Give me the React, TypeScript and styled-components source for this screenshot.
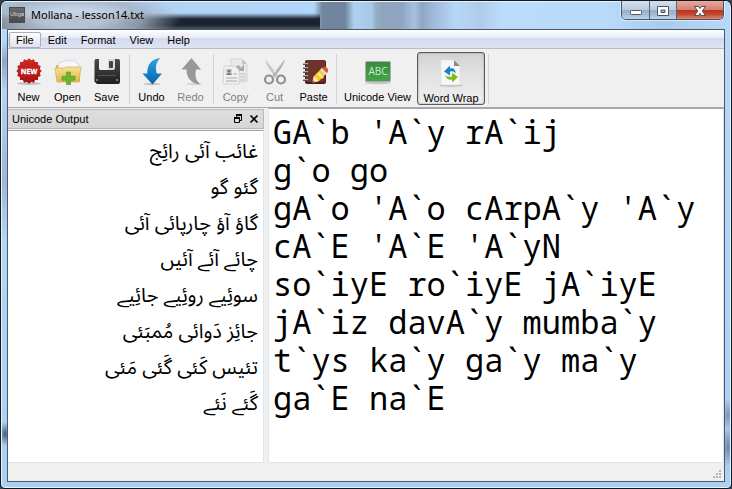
import React from "react";
import styled, { createGlobalStyle, css } from "styled-components";

const GlobalStyle = createGlobalStyle`
  html, body, #root { height: 100%; margin: 0; }
  body { background: #3b4148; font-family: "Liberation Sans", Arial, sans-serif; font-size: 11px; color: #000; }
  * { box-sizing: border-box; }
  button, textarea { font: inherit; color: inherit; margin: 0; }
`;

const Window = styled.div`
  min-height: 100vh;
  display: flex;
  flex-direction: column;
  border: 1px solid #14181e;
  border-radius: 7px 7px 5px 5px;
  padding: 0 6px 6px;
  box-shadow: inset 0 0 0 1px #e6f2fd;
  overflow: hidden;
  background:
    linear-gradient(180deg, transparent 40px, #8fa6c4 60px, #b4d4f4 90px, #9db8d6 180px, #b4d6f8 240px, transparent 300px) left / 7px 100% no-repeat,
    radial-gradient(ellipse 7px 12px at 4px 433px, #4c6078, transparent),
    radial-gradient(ellipse 7px 20px at 727px 446px, #6b86a8, transparent),
    radial-gradient(ellipse 7px 16px at 727px 414px, #7c97b8, transparent),
    linear-gradient(#b6d9fb, #abd0f3);
`;

const TitleBar = styled.header`
  flex: 0 0 28px;
  margin: 0 -5px;
  padding: 0 0 0 7px;
  display: flex;
  align-items: flex-start;
  border-top: 1px solid #e6f2fd;
  background:
    radial-gradient(ellipse 110px 30px at 70px 16px, rgba(200, 212, 226, 0.9) 30%, rgba(165, 178, 193, 0.8) 65%, transparent),
    linear-gradient(180deg, transparent 11px, #1b242d 17px, #1a222b 23px, #45566a 27px) 0 0 / 318px 100% no-repeat,
    linear-gradient(90deg, #afd0f3 0, #b2d6fb 312px, #72869f 320px, #71849f 343px, #aed0f0 352px, #a8c8e4 370px, #8fb0c6 374px, #91a4be 380px, #8fa5c2 400px, #a6c2e0 412px, #8fa6c4 420px, #9db8d8 430px, #a9c4e4 440px, #b6d8f8 454px, #b0cbea 478px, #bbdcfb 500px, #b9dcfc 600px, #a9cbed 660px, #b6d9fb 100%);
`;

const AppIcon = styled.span`
  width: 16px;
  height: 16px;
  margin-top: 5px;
  background: linear-gradient(#68696b, #4b4c4e);
  border: 1px solid #4a4b4d;
  color: #d5d7da;
  font-size: 6px;
  line-height: 13px;
  text-align: center;
  overflow: hidden;
`;

const Title = styled.h1`
  flex: 1;
  margin: 4px 0 0 6px;
  font-family: "Noto Sans", "Open Sans", sans-serif;
  font-size: 11px;
  line-height: 18px;
  font-weight: 400;
  white-space: nowrap;
`;

const Captions = styled.div`
  display: flex;
  height: 19px;
  margin: -1px 6px 0 0;
  border: 1px solid #45556b;
  border-top: 0;
  border-radius: 0 0 5px 5px;
  overflow: hidden;
  box-shadow: 0 0 0 1px rgba(230, 243, 255, 0.7);
`;

const Caption = styled.button<{ $close?: boolean }>`
  width: ${(p) => (p.$close ? 47 : 27)}px;
  padding: 1px 0 0;
  border: 0;
  border-left: 1px solid #55677e;
  &:first-child { border-left: 0; }
  display: grid;
  place-items: center;
  background: ${(p) =>
    p.$close
      ? "linear-gradient(#e5aca0, #d5806f 48%, #b8351f 52%, #c34a30 75%, #dd8a6c)"
      : "linear-gradient(#d4e1ee, #b9cbdf 48%, #98aec7 52%, #a4bbd4 75%, #bdd4ec)"};
`;

const Client = styled.div`
  flex: 1;
  display: flex;
  flex-direction: column;
  border: 1px solid #4b5867;
  background: #f0f0f0;
  min-height: 0;
`;

const MenuBar = styled.nav`
  flex: 0 0 19px;
  display: flex;
  align-items: center;
  padding: 1px 1px 0;
  background: linear-gradient(#ffffff, #e7ebf5 8px, #d5dbee 8px, #dfe4f4);
  border-bottom: 1px solid #b8bbd0;
`;

const MenuItem = styled.button<{ $active?: boolean }>`
  height: 16px;
  padding: 0 6px;
  border: 1px solid ${(p) => (p.$active ? "#a9adba" : "transparent")};
  border-radius: 2px;
  background: ${(p) => (p.$active ? "linear-gradient(#fdfdfe, #dfe3ee)" : "transparent")};
  line-height: 14px;
`;

const ToolBar = styled.div`
  flex: 0 0 59px;
  display: flex;
  padding: 3px 1px 2px;
  border-bottom: 1px solid #a8a8ac;
`;

const Tool = styled.button<{ $width?: number; $pressed?: boolean }>`
  width: ${(p) => p.$width ?? 39}px;
  height: 53px;
  padding: 5px 0 0;
  border: 1px solid transparent;
  background: none;
  display: flex;
  flex-direction: column;
  align-items: center;
  gap: 3px;
  line-height: 16px;
  white-space: nowrap;
  &:disabled { color: #808080; }
  svg { flex: none; }
  ${(p) =>
    p.$pressed &&
    css`
      margin-left: 1px;
      padding-top: 6px;
      border-color: #5a5a5c;
      border-radius: 3px;
      background: linear-gradient(#d2d2d2, #e2e2e2 40%, #efefef);
      box-shadow: inset 0 0 2px #8c8c8c;
    `}
`;

const Separator = styled.span`
  width: 6px;
  height: 50px;
  margin-top: 2px;
  background: linear-gradient(#d2d2d4, #d2d2d4) center / 1px 100% no-repeat;
`;

const Panes = styled.main`
  flex: 1;
  display: grid;
  grid-template-columns: 256px minmax(0, 1fr);
  gap: 4px;
  min-height: 0;
`;

const Dock = styled.section`
  display: flex;
  flex-direction: column;
  padding-top: 1px;
`;

const DockTitle = styled.div`
  height: 20px;
  display: flex;
  align-items: center;
  padding: 0 1px 0 4px;
  border: 1px solid #b9b9bb;
  border-left: 0;
  background: linear-gradient(#dedede, #d6d6d6);
`;

const DockName = styled.label`
  flex: 1;
  line-height: 16px;
`;

const DockButton = styled.button`
  width: 16px;
  height: 16px;
  padding: 0;
  border: 0;
  background: none;
  display: grid;
  place-items: center;
`;

const Output = styled.textarea`
  flex: 1;
  width: 100%;
  margin-top: 1px;
  padding: 3px 5px;
  border: 1px solid #e0e5ec;
  border-top-color: #a4a6ac;
  border-left: 0;
  outline: 0;
  resize: none;
  overflow: hidden;
  background: #fff;
  font-family: "Noto Sans Arabic", "Noto Naskh Arabic", "DejaVu Sans", sans-serif;
  font-size: 20px;
  line-height: 36px;
`;

const Editor = styled.textarea`
  width: 100%;
  height: 100%;
  padding: 4px 4px;
  border: 1px solid #dfe5ec;
  border-top-color: #a4a6ac;
  outline: 0;
  resize: none;
  overflow: hidden;
  background: #fff;
  font-family: "Noto Sans Mono", "DejaVu Sans Mono", monospace;
  font-size: 32px;
  line-height: 38px;
`;

const StatusBar = styled.footer`
  flex: 0 0 18px;
  display: flex;
  justify-content: flex-end;
  align-items: flex-end;
  padding: 0 2px 2px;
`;

const unicodeText = [
  "غائب آئی رائِج",
  "گئو گو",
  "گاؤ آؤ چارپائی آئی",
  "چائے آئے آئیں",
  "سوئِیے روئِیے جائِیے",
  "جائِز دَوائی مُمبَئی",
  "تئیس کَئی گَئی مَئی",
  "گَئے نَئے",
].join("\n");

const sourceText = [
  "GA`b 'A`y rA`ij",
  "g`o go",
  "gA`o 'A`o cArpA`y 'A`y",
  "cA`E 'A`E 'A`yN",
  "so`iyE ro`iyE jA`iyE",
  "jA`iz davA`y mumba`y",
  "t`ys ka`y ga`y ma`y",
  "ga`E na`E",
].join("\n");

const Icon = ({ children }: { children: React.ReactNode }) => (
  <svg width="28" height="28" viewBox="0 0 28 28" aria-hidden="true">
    {children}
  </svg>
);

const burst = Array.from({ length: 32 }, (_, i) => {
  const r = i % 2 ? 11 : 12.7;
  const a = (i * Math.PI) / 16;
  return `${(14 + r * Math.cos(a)).toFixed(1)},${(13 + r * Math.sin(a)).toFixed(1)}`;
}).join(" ");

const NewIcon = () => (
  <Icon>
    <defs>
      <linearGradient id="red" x1="0" y1="0" x2="0" y2="1">
        <stop offset="0" stopColor="#cf2a24" />
        <stop offset="1" stopColor="#a80f12" />
      </linearGradient>
    </defs>
    <ellipse cx="14" cy="25.5" rx="12" ry="1.5" fill="#bdbdbd" />
    <polygon points={burst} fill="url(#red)" />
    <text x="14" y="16" textAnchor="middle" fontSize="7" fontWeight="700" fontFamily="Open Sans, sans-serif" fill="#fff" stroke="#fff" strokeWidth=".3">NEW</text>
  </Icon>
);

const OpenIcon = () => (
  <Icon>
    <defs>
      <linearGradient id="folder" x1="0" y1="0" x2="0" y2="1">
        <stop offset="0" stopColor="#f8e09a" />
        <stop offset="1" stopColor="#e2b64c" />
      </linearGradient>
    </defs>
    <path d="M2 7h7l2 2h15v15H3z" fill="#dbb255" />
    <path d="M4 9l1-4 4-1 3-2 4 1 4-1 3 3 2 1v5H4z" fill="#f5f7f8" stroke="#c9d2d6" strokeWidth=".8" />
    <path d="M1 10h9l2-1h15l-2 15H3z" fill="url(#folder)" stroke="#d4ac4e" strokeWidth=".7" />
    <path d="M12.5 14h4v4.200h4.500v4h-4.500V26.500h-4v-4.300H8v-4h4.500z" fill="#68b62c" stroke="#4f9a1c" strokeWidth=".6" />
  </Icon>
);

const SaveIcon = () => (
  <Icon>
    <defs>
      <linearGradient id="disk" x1="0" y1="0" x2="0" y2="1">
        <stop offset="0" stopColor="#4a4a4a" />
        <stop offset="1" stopColor="#1f1f1f" />
      </linearGradient>
    </defs>
    <path d="M3 1h22q2 0 2 2v21q0 2-2 2H4l-2.500-2.500V3q0-2 1.500-2z" fill="url(#disk)" />
    <path d="M6 1h16v9q0 2-2 2H8q-2 0-2-2z" fill="#d9d9d9" />
    <path d="M6 1h9v11H8q-2 0-2-2z" fill="#efefef" />
    <rect x="16" y="3" width="4" height="7" rx="1" fill="#444" />
    <rect x="5" y="17" width="18" height="1" fill="#555" />
    <rect x="3" y="21" width="2" height="2" fill="#777" />
    <rect x="23" y="21" width="2" height="2" fill="#777" />
  </Icon>
);

const UndoIcon = () => (
  <Icon>
    <defs>
      <linearGradient id="blue" x1="0" y1="0" x2="0" y2="1">
        <stop offset="0" stopColor="#2ba3e2" />
        <stop offset="1" stopColor="#0564ad" />
      </linearGradient>
    </defs>
    <ellipse cx="14" cy="26" rx="9" ry="1.200" fill="#c4c4c4" />
    <path d="M22.500 0C13 1 9 7 9.300 15.500H4.500L14.500 26.500 24 15.500h-5.200C17 9 18 4 22.500 0z" fill="url(#blue)" />
  </Icon>
);

const RedoIcon = () => (
  <Icon>
    <ellipse cx="17" cy="26" rx="8" ry="1.200" fill="#d4d4d4" />
    <path d="M23.500 26.500C14 25.500 9.500 20 9.500 11.500H4.500L14.500 0 24 11.500h-5C17.500 18 19 23 23.500 26.500z" fill="#989898" />
  </Icon>
);

const CopyIcon = () => (
  <Icon>
    <path d="M9 1h11l5 5v18H9z" fill="#e9e9e9" stroke="#d0d0d0" strokeWidth=".8" />
    <path d="M20 1l5 5h-5z" fill="#c4c4c4" />
    <path d="M13 9l4-2 2 3 3-4v7h-8z" fill="#ababab" />
    <path d="M18 16h6M18 19h6M18 22h6" stroke="#c3c3c3" />
    <path d="M2 8h11l4 4v14H1z" fill="#f1f1f1" stroke="#cbcbcb" strokeWidth=".8" />
    <rect x="4" y="11" width="6" height="6" fill="#c9c9c9" />
    <circle cx="7" cy="13" r="1.500" fill="#777" />
    <path d="M4 17q3-4 6 0z" fill="#777" />
    <path d="M11 16h4M4 20h11M4 23h11" stroke="#aaa" />
  </Icon>
);

const CutIcon = () => (
  <Icon>
    <path d="M4 1l12.500 16-2 2.500C10 13 5.500 8 4 1z" fill="#c8c8c8" />
    <path d="M24 1L11.500 17l2 2.500C18 13 22.500 8 24 1z" fill="#b4b4b4" />
    <circle cx="14" cy="13.500" r="1" fill="#eee" />
    <circle cx="8" cy="21.500" r="4" fill="none" stroke="#8f8f8f" strokeWidth="2.200" />
    <circle cx="20" cy="21.500" r="4" fill="none" stroke="#8f8f8f" strokeWidth="2.200" />
  </Icon>
);

const PasteIcon = () => (
  <Icon>
    <rect x="5" y="2" width="21" height="24" rx="2" fill="#4b1d17" />
    <rect x="6" y="2" width="19" height="22" rx="2" fill="#70332a" />
    <path d="M3 6h6M3 10h6M3 14h6M3 18h6M3 22h6" stroke="#55504f" strokeWidth="1.800" />
    <path d="M3 5.500h5M3 9.500h5M3 13.500h5M3 17.500h5M3 21.500h5" stroke="#d5d5d5" strokeWidth=".7" />
    <path d="M12 25l2-7 8-8 5 5-8 8z" fill="#f7c928" />
    <path d="M17 16l5 5 2-2-5-5z" fill="#fde56e" />
    <path d="M12 25l2-7 5 5z" fill="#f6e3bd" />
    <path d="M12 25l.8-2.800 2 2z" fill="#333" />
    <path d="M20 12l2-2 5 5-2 2z" fill="#ddd" />
    <path d="M22 10q2-2 4-1 3 2 2 5l-1 1z" fill="#e75327" />
  </Icon>
);

const BoardIcon = () => (
  <Icon>
    <defs>
      <linearGradient id="board" x1="0" y1="0" x2="0" y2="1">
        <stop offset="0" stopColor="#3a8a40" />
        <stop offset="1" stopColor="#45a347" />
      </linearGradient>
    </defs>
    <ellipse cx="14" cy="25" rx="13" ry="1.200" fill="#c4c4c4" />
    <rect x="1" y="3" width="26" height="21" rx="1.500" fill="#a9aca9" />
    <rect x="2" y="4" width="24" height="19" rx="1" fill="url(#board)" />
    <text x="14" y="17" textAnchor="middle" fontSize="10" fontFamily="Open Sans, sans-serif" fill="#c9ecc9">ABC</text>
  </Icon>
);

const WrapIcon = () => (
  <Icon>
    <ellipse cx="14" cy="26.500" rx="12" ry="1.200" fill="#b9b9b9" />
    <path d="M4 1h13l6 6v19H4z" fill="#f7f7f7" stroke="#dedede" strokeWidth=".7" />
    <path d="M17 1l6 6h-6z" fill="#8b8b8b" />
    <path d="M7 12.500l6-6v3q5-1 6 5-2-3-6-2v4z" fill="#1c80c4" />
    <path d="M21 18l-6 5.500v-3q-5 1-7-4 3 2 7 1v-4z" fill="#7fba1f" />
  </Icon>
);

export default function App() {
  return (
    <>
      <GlobalStyle />
      <Window>
        <TitleBar>
          <AppIcon aria-hidden="true">Ubga</AppIcon>
          <Title>Mollana - lesson14.txt</Title>
          <Captions>
            <Caption aria-label="Minimize">
              <svg width="14" height="14" viewBox="0 0 14 14">
                <rect x="1.500" y="6.500" width="11" height="4" rx="1" fill="#fff" stroke="#4b5668" />
              </svg>
            </Caption>
            <Caption aria-label="Maximize">
              <svg width="14" height="14" viewBox="0 0 14 14">
                <path d="M1.500 2.500h11v9h-11zM5 6v2.500h4V6z" fill="#fff" fillRule="evenodd" stroke="#4b5668" />
              </svg>
            </Caption>
            <Caption $close aria-label="Close">
              <svg width="14" height="14" viewBox="0 0 14 14">
                <path d="M1.500 2.500h4L7 4.500l1.500-2h4L9.300 7l3.200 4.500h-4L7 9.500l-1.500 2h-4L4.700 7z" fill="#fff" stroke="#574653" />
              </svg>
            </Caption>
          </Captions>
        </TitleBar>
        <Client>
          <MenuBar>
            <MenuItem $active>File</MenuItem>
            <MenuItem>Edit</MenuItem>
            <MenuItem>Format</MenuItem>
            <MenuItem>View</MenuItem>
            <MenuItem>Help</MenuItem>
          </MenuBar>
          <ToolBar role="toolbar">
            <Tool><NewIcon />New</Tool>
            <Tool><OpenIcon />Open</Tool>
            <Tool><SaveIcon />Save</Tool>
            <Separator />
            <Tool><UndoIcon />Undo</Tool>
            <Tool disabled><RedoIcon />Redo</Tool>
            <Separator />
            <Tool disabled><CopyIcon />Copy</Tool>
            <Tool disabled><CutIcon />Cut</Tool>
            <Tool><PasteIcon />Paste</Tool>
            <Separator />
            <Tool $width={77}><BoardIcon />Unicode View</Tool>
            <Tool $width={68} $pressed aria-pressed="true"><WrapIcon />Word Wrap</Tool>
            <Separator />
          </ToolBar>
          <Panes>
            <Dock>
              <DockTitle>
                <DockName htmlFor="output">Unicode Output</DockName>
                <DockButton aria-label="Float">
                  <svg width="10" height="10" viewBox="0 0 10 10" fill="none" stroke="#000">
                    <path d="M3 1h6M3.500 1v2M8.500 1v5.500H6.500M1 4h6M1.500 4v4.500h5V4" />
                    <path d="M3 1h6M1 4h6" strokeWidth="2" />
                  </svg>
                </DockButton>
                <DockButton aria-label="Close panel">
                  <svg width="10" height="10" viewBox="0 0 10 10" stroke="#000" strokeWidth="1.600">
                    <path d="M1.500 1.500l7 7M8.500 1.500l-7 7" />
                  </svg>
                </DockButton>
              </DockTitle>
              <Output id="output" dir="rtl" lang="ur" readOnly spellCheck={false} value={unicodeText} />
            </Dock>
            <Editor aria-label="Source text" spellCheck={false} defaultValue={sourceText} />
          </Panes>
          <StatusBar>
            <svg width="9" height="9" viewBox="0 0 9 9" fill="#b4b4b8">
              <path d="M6 0h2v2H6zM3 3h2v2H3zM6 3h2v2H6zM0 6h2v2H0zM3 6h2v2H3zM6 6h2v2H6z" />
            </svg>
          </StatusBar>
        </Client>
      </Window>
    </>
  );
}
